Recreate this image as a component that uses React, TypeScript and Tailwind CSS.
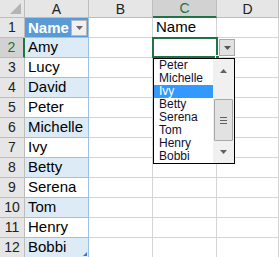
import React from "react";

const names = ["Amy", "Lucy", "David", "Peter", "Michelle", "Ivy", "Betty", "Serena", "Tom", "Henry", "Bobbi"];
const listItems = ["Peter", "Michelle", "Ivy", "Betty", "Serena", "Tom", "Henry", "Bobbi"];
const cols = ["A", "B", "C", "D"];

const Tri = ({ up = false, color = "#555" }: { up?: boolean; color?: string }) => (
  <svg width="7" height="4" viewBox="0 0 7 4">
    <path d={up ? "M0 4 L3.5 0 L7 4 Z" : "M0 0 L7 0 L3.5 4 Z"} fill={color} />
  </svg>
);

export default function App() {
  const rows = [1, 2, 3, 4, 5, 6, 7, 8, 9, 10, 11, 12];

  return (
    <div
      className="relative w-[279px] h-[257px] overflow-hidden bg-white text-[15px] leading-[18px] text-black"
      style={{ fontFamily: '"Liberation Sans", Arial, sans-serif' }}
    >
      <div className="grid grid-cols-[25px_64px_64px_64px_62px] grid-rows-[18px_repeat(12,20px)]">
        {/* corner */}
        <div className="relative bg-[#e6e6e6] border-r border-b border-[#bdbdbd]">
          <div className="absolute right-[3px] bottom-[3px] w-0 h-0 border-l-[11px] border-l-transparent border-b-[11px] border-b-[#b4b4b4]" />
        </div>
        {cols.map((c) => (
          <div
            key={c}
            className={
              c === "C"
                ? "flex items-center justify-center text-[14px] bg-[#d2d2d2] border-r border-[#bdbdbd] border-b-2 border-b-[#217346] text-[#217346]"
                : "flex items-center justify-center text-[14px] bg-[#e6e6e6] border-r border-b border-[#bdbdbd] text-[#222]"
            }
          >
            {c}
          </div>
        ))}

        {rows.map((r) => {
          const even = r % 2 === 0;
          const aCell =
            r === 1 ? (
              <div key={`a${r}`} className="flex items-center justify-between bg-[#5b9bd5] border-r border-b border-[#9bc2e6] pl-[3px] pr-px">
                <span className="font-bold text-white">Name</span>
                <div className="w-[16px] h-[16px] flex items-center justify-center bg-[#f0f0f0] border border-[#b8b8b8]">
                  <Tri color="#666" />
                </div>
              </div>
            ) : (
              <div
                key={`a${r}`}
                className={`relative flex items-end pl-[3px] pb-px border-r border-b border-[#9bc2e6] ${even ? "bg-[#ddebf7]" : "bg-white"}`}
              >
                {names[r - 2]}
                {r === 12 && (
                  <div className="absolute right-px bottom-px w-0 h-0 border-l-[4px] border-l-transparent border-b-[4px] border-b-[#4472c4]" />
                )}
              </div>
            );
          return (
            <React.Fragment key={r}>
              <div
                className={
                  r === 2
                    ? "flex items-end justify-center pb-px text-[14px] bg-[#d2d2d2] border-b border-[#bdbdbd] border-r-2 border-r-[#217346] text-[#217346]"
                    : "flex items-end justify-center pb-px text-[14px] bg-[#e6e6e6] border-r border-b border-[#bdbdbd] text-[#222]"
                }
              >
                {r}
              </div>
              {aCell}
              <div className="border-r border-b border-[#d4d4d4]" />
              <div className="flex items-end pl-[3px] pb-px border-r border-b border-[#d4d4d4]">
                {r === 1 ? "Name" : ""}
              </div>
              <div className="border-r border-b border-[#d4d4d4]" />
            </React.Fragment>
          );
        })}
      </div>

      {/* selected cell C2 */}
      <div className="absolute left-[152px] top-[37px] w-[66px] h-[21px] border-2 border-[#217346]" />
      <div className="absolute left-[215px] top-[55px] w-[5px] h-[5px] bg-[#217346] border border-white" />

      {/* dropdown button */}
      <div className="absolute left-[219px] top-[39px] w-[16px] h-[17px] flex items-center justify-center bg-[#e1e1e1] border border-[#a8a8a8]">
        <Tri color="#555" />
      </div>

      {/* dropdown list */}
      <div
        className="absolute left-[153px] top-[58px] w-[82px] h-[106px] flex bg-white border border-black text-[12px] leading-[13px]"
        style={{ fontFamily: '"Liberation Sans", Tahoma, sans-serif' }}
      >
        <div className="flex-1 flex flex-col">
          {listItems.map((n) => (
            <div
              key={n}
              className={`h-[13px] pl-[5px] ${n === "Ivy" ? "bg-[#3399ff] text-white" : "text-[#101030]"}`}
            >
              {n}
            </div>
          ))}
        </div>
        <div className="w-[21px] flex flex-col items-center bg-[#f0f0f0]">
          <div className="h-[24px] flex items-center justify-center">
            <Tri up color="#606060" />
          </div>
          <div className="flex-1 w-full px-px">
            <div className="mt-[16px] h-[42px] w-full flex flex-col items-center justify-center gap-[2px] bg-[#e2e2e2] border border-[#a8a8a8] rounded-[1px]">
              <div className="w-[7px] h-px bg-[#606060]" />
              <div className="w-[7px] h-px bg-[#606060]" />
              <div className="w-[7px] h-px bg-[#606060]" />
            </div>
          </div>
          <div className="h-[22px] flex items-center justify-center">
            <Tri color="#606060" />
          </div>
        </div>
      </div>
    </div>
  );
}
